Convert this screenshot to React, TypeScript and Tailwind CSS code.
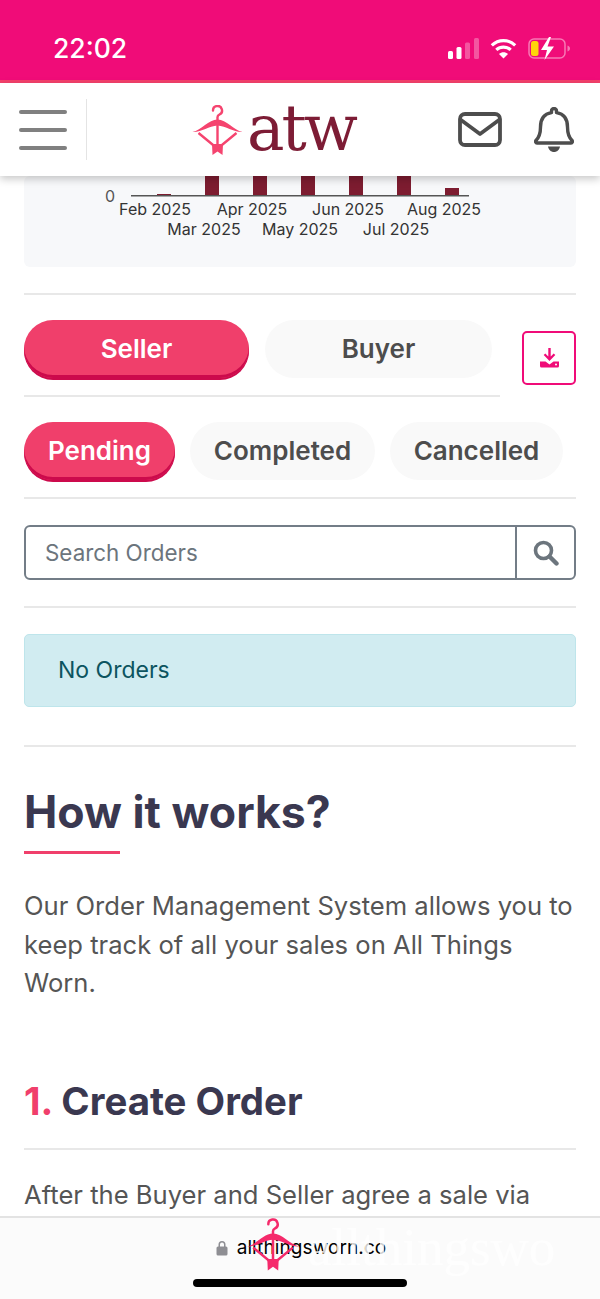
const INTER = "font-['Inter',sans-serif]";

function Hanger({ className }: { className?: string }) {
  return (
    <svg viewBox="0 0 50 50" fill="none" className={className}>
      <path
        d="M20.500 5.500a4.500 4.500 0 1 1 6.500 4c-1.400.7-2 1.300-2 2.700V16"
        stroke="currentColor"
        strokeWidth="2.400"
        strokeLinecap="round"
      />
      <path d="M0 27C9 25 16 14.500 25 14.500S41 25 50 27C41 27.500 34 21 25 20.500 16 21 9 27.500 0 27Z" fill="currentColor" />
      <path d="M6 28 23 42M44 28 27 42M25 16v27" stroke="currentColor" strokeWidth="2.400" />
      <path d="M19.500 39h11L30 50l-5-3.500-5 3.500Z" fill="currentColor" />
    </svg>
  );
}

function StatusBar() {
  return (
    <div className="flex h-[83px] shrink-0 items-start justify-between border-b-[3px] border-[#f5416c] bg-[#f00c78] pl-[53px] pr-[30px]">
      <span className={`${INTER} mt-[31px] text-[26.500px] leading-[34px] font-medium text-white`}>22:02</span>
      <div className="mt-[37px] flex items-center gap-[11px]">
        <svg width="31" height="21" viewBox="0 0 31 21">
          <rect x="0" y="13" width="5" height="8" rx="1.500" fill="#fff" />
          <rect x="8.500" y="9" width="5" height="12" rx="1.500" fill="#fff" />
          <rect x="17" y="4.500" width="5" height="16.500" rx="1.500" fill="#fff" fillOpacity="0.3" />
          <rect x="26" y="0" width="5" height="21" rx="1.500" fill="#fff" fillOpacity="0.3" />
        </svg>
        <svg width="27" height="21" viewBox="0 0 27 21" fill="none">
          <path d="M1.800 7.300C8.500 1 18.500 1 25.200 7.300" stroke="#fff" strokeWidth="3.200" />
          <path d="M6.300 11.800c4-3.700 10.400-3.700 14.400 0" stroke="#fff" strokeWidth="3.200" />
          <path d="M13.500 20.500 9 16c2.500-2.200 6.500-2.200 9 0Z" fill="#fff" />
        </svg>
        <svg width="42" height="23" viewBox="0 0 42 23" fill="none">
          <rect x="1" y="2" width="36" height="19" rx="5" stroke="#fff" strokeOpacity="0.45" strokeWidth="1.500" />
          <path d="M39.500 8.500c1.500.5 2.500 1.700 2.500 3s-1 2.500-2.500 3Z" fill="#fff" fillOpacity="0.45" />
          <rect x="3" y="4" width="7.500" height="15" rx="2.500" fill="#ffd60a" />
          <path d="M21 0 13 13h6l-2.500 10L26 9.500h-6.500L23 0Z" fill="#fff" />
        </svg>
      </div>
    </div>
  );
}

function Header() {
  return (
    <header className="relative z-10 flex h-[93px] shrink-0 items-center bg-white shadow-[0_3px_8px_rgba(0,0,0,0.22)]">
      <div className="flex h-[61px] w-[87px] flex-col justify-center gap-[14px] border-r border-[#e4e4e4] pl-[19px] pr-[19px]">
        <div className="h-[4px] rounded-full bg-[#808080]" />
        <div className="h-[4px] rounded-full bg-[#808080]" />
        <div className="h-[4px] rounded-full bg-[#808080]" />
      </div>
      <div className="ml-[105px] flex items-center blur-[0.5px]">
        <Hanger className="h-[50px] w-[51px] text-[#f5446f]" />
        <span className="mb-[2px] ml-[4px] font-['DejaVu_Serif',serif] text-[63px] leading-[60px] tracking-[-3px] text-[#7d1c35]">
          atw
        </span>
      </div>
      <div className="ml-auto flex items-center gap-[32px] pr-[26px]">
        <svg width="44" height="35" viewBox="0 0 44 35" fill="none" stroke="#4d4d4d" strokeWidth="3.800" strokeLinejoin="round">
          <rect x="2" y="2" width="40" height="31" rx="5" />
          <path d="M3 8 22 22 41 8" />
        </svg>
        <svg width="40" height="46" viewBox="0 0 40 46" fill="none">
          <path d="M20 1.500a2.500 2.500 0 0 1 2.500 2.500v1.600C30 6.800 33.500 12.500 33.500 20c0 6.500 1.500 10.500 4.500 13.500.8.900.3 2.500-1 2.500H3C1.700 36 1.200 34.400 2 33.500 5 30.500 6.500 26.500 6.500 20 6.500 12.500 10 6.800 17.500 5.600V4A2.500 2.500 0 0 1 20 1.500Z" stroke="#4d4d4d" strokeWidth="3.400" strokeLinejoin="round" />
          <path d="M14 39.500h12c-.6 3.400-3 5.500-6 5.500s-5.400-2.100-6-5.500Z" fill="#4d4d4d" />
        </svg>
      </div>
    </header>
  );
}

const topLabels = [
  { x: 131, t: "Feb 2025" },
  { x: 228, t: "Apr 2025" },
  { x: 324, t: "Jun 2025" },
  { x: 420, t: "Aug 2025" },
];
const lowLabels = [
  { x: 180, t: "Mar 2025" },
  { x: 276, t: "May 2025" },
  { x: 372, t: "Jul 2025" },
];
const bars = [
  { x: 133, h: 2 },
  { x: 181, h: 20 },
  { x: 229, h: 20 },
  { x: 277, h: 20 },
  { x: 325, h: 20 },
  { x: 373, h: 20 },
  { x: 421, h: 8 },
];

function ChartTail() {
  return (
    <div className="h-[91px] rounded-[6px] bg-[#f7f8fa]">
      <svg width="552" height="91" viewBox="0 0 552 91" className={INTER}>
        {bars.map((b) => (
          <rect key={b.x} x={b.x} y={20 - b.h} width="14" height={b.h} fill="#7d1c30" />
        ))}
        <rect x="107" y="19" width="338" height="1.500" fill="#555" />
        <text x="81" y="26" fill="#555" fontSize="16">0</text>
        {topLabels.map((l) => (
          <text key={l.t} x={l.x} y="39" textAnchor="middle" fill="#333" fontSize="16">{l.t}</text>
        ))}
        {lowLabels.map((l) => (
          <text key={l.t} x={l.x} y="59" textAnchor="middle" fill="#333" fontSize="16">{l.t}</text>
        ))}
      </svg>
    </div>
  );
}

function Pill({ label, active, className }: { label: string; active?: boolean; className?: string }) {
  return (
    <div
      className={`flex h-[58px] items-center justify-center rounded-full pb-[2px] text-[26px] font-semibold ${
        active
          ? "bg-[#f03f6b] text-white shadow-[inset_0_-3px_0_#cc0a4c,0_2px_0_#cc0a4c]"
          : "bg-[#f9f9f9] text-[#4d4d4d]"
      } ${className ?? ""}`}
    >
      {label}
    </div>
  );
}

function Divider({ className }: { className?: string }) {
  return <div className={`h-[2px] bg-[#e8e8e8] ${className ?? ""}`} />;
}

function DownloadIcon() {
  return (
    <svg width="19" height="20" viewBox="0 0 19 20" fill="#f00c78">
      <path d="M8.300 0h2.400v8.500l3-3 1.600 1.600-5.800 5.800-5.800-5.800 1.600-1.600 3 3Z" />
      <path d="M0 13.500h5.500l4 3 4-3H19v4.500a1.500 1.500 0 0 1-1.500 1.500h-16A1.500 1.500 0 0 1 0 18Z" />
      <circle cx="16" cy="16.500" r="1" fill="#fff" />
    </svg>
  );
}

function OrderControls() {
  return (
    <>
      <div className="mt-[25px] flex items-start justify-between">
        <div className="w-[476px]">
          <div className="flex gap-[16px]">
            <Pill label="Seller" active className="w-[225px]" />
            <Pill label="Buyer" className="w-[227px]" />
          </div>
          <Divider className="mt-[17px]" />
        </div>
        <div className="mt-[11px] flex h-[54px] w-[54px] items-center justify-center rounded-[5px] border-2 border-[#f00c78]">
          <DownloadIcon />
        </div>
      </div>
      <div className="mt-[25px] flex gap-[15px]">
        <Pill label="Pending" active className="w-[151px]" />
        <Pill label="Completed" className="w-[185px]" />
        <Pill label="Cancelled" className="w-[173px]" />
      </div>
      <Divider className="mt-[17px]" />
      <div className="mt-[26px] flex h-[55px] rounded-[6px] border-2 border-[#737d87]">
        <div className="flex flex-1 items-center pl-[19px] text-[22.400px] text-[#6c757d]">Search Orders</div>
        <div className="flex w-[59px] items-center justify-center border-l-2 border-[#737d87]">
          <svg width="26" height="26" viewBox="0 0 26 26" fill="none" stroke="#6c757d">
            <circle cx="10.500" cy="10.500" r="8" strokeWidth="3.600" />
            <path d="M16.500 16.500 23.500 23.500" strokeWidth="4.400" strokeLinecap="round" />
          </svg>
        </div>
      </div>
      <Divider className="mt-[26px]" />
      <div className="mt-[26px] flex h-[73px] items-center rounded-[5px] border border-[#bee5eb] bg-[#d1ecf1] pl-[33px] text-[23px] text-[#0c5460]">
        No Orders
      </div>
      <Divider className="mt-[38px]" />
    </>
  );
}

function HowItWorks() {
  return (
    <section>
      <h1 className="mt-[35px] text-[44.600px] leading-[60px] font-bold text-[#3a3850]">How it works?</h1>
      <div className="mt-[9px] h-[3px] w-[96px] bg-[#f03f6b]" />
      <p className="mt-[33px] text-[25.600px] leading-[38.500px] text-[#555]">
        Our Order Management System allows you to keep track of all your sales on All Things Worn.
      </p>
      <h2 className="mt-[73px] text-[38.400px] leading-[50px] font-bold text-[#3a3850]">
        <span className="text-[#f03f6b]">1.</span> Create Order
      </h2>
      <Divider className="mt-[22px]" />
      <p className="mt-[26px] whitespace-nowrap text-[25.600px] leading-[38.500px] text-[#555]">
        After the Buyer and Seller agree a sale via
      </p>
    </section>
  );
}

function BrowserBar() {
  return (
    <footer className="relative z-10 h-[83px] shrink-0 overflow-hidden border-t-2 border-[#e3e3e3] bg-[#fbfbfb]">
      <div className="mt-[18px] flex items-center justify-center pl-[2px]">
        <svg width="12" height="16" viewBox="0 0 12 16" className="mr-[9px]" fill="#8e8e93">
          <path d="M2.500 7V4.500a3.500 3.500 0 0 1 7 0V7h-1.500V4.500a2 2 0 0 0-4 0V7Z" />
          <rect x="0.500" y="6.500" width="11" height="9" rx="1.500" />
        </svg>
        <span className={`${INTER} text-[19px] leading-[24px] tracking-[0.1px] text-black`}>allthingsworn.co</span>
      </div>
      <span className="absolute top-[3px] left-[308px] font-['Liberation_Serif',serif] text-[53px] leading-[52px] text-white/80">
        allthingswo
      </span>
      <Hanger className="absolute top-[0px] left-[247px] h-[53px] w-[52px] text-[#f52a6b]" />
      <div className="absolute top-[61px] left-[193px] h-[8px] w-[214px] rounded-full bg-black" />
    </footer>
  );
}

export default function App() {
  return (
    <div className={`${INTER} flex h-[1299px] w-[600px] flex-col overflow-hidden bg-white`}>
      <StatusBar />
      <Header />
      <main className="min-h-0 flex-1 overflow-hidden px-[24px]">
        <ChartTail />
        <Divider className="mt-[26px]" />
        <OrderControls />
        <HowItWorks />
      </main>
      <BrowserBar />
    </div>
  );
}
